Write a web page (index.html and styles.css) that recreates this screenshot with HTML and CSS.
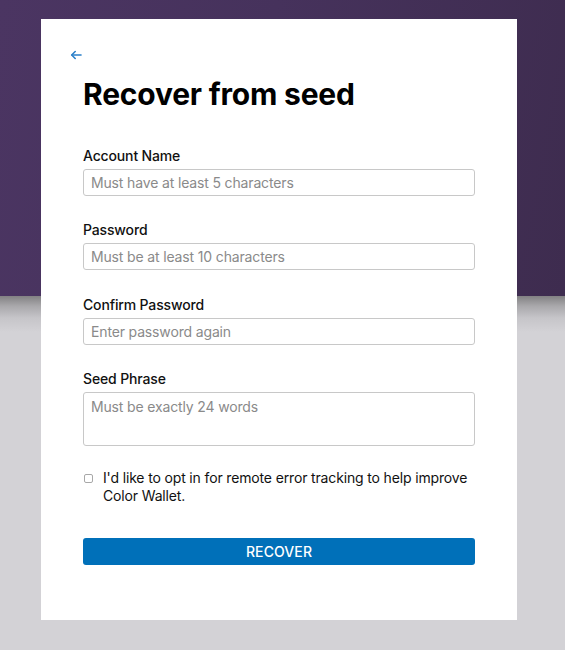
FILE: index.html
```html
<!DOCTYPE html>
<html lang="en">
<head>
<meta charset="utf-8">
<title>Recover from seed</title>
<link rel="stylesheet" href="styles.css">
</head>
<body>
<div class="backdrop">
  <div class="banner"></div>
  <div class="floor"></div>
</div>
<main class="card">
  <a class="back" href="#" aria-label="Back">
    <svg width="12" height="10" viewBox="0 0 12 10" fill="none" stroke="#2b80c9" stroke-width="1.6" stroke-linecap="round" stroke-linejoin="round"><path d="M11 5H2"/><path d="M5.2 1.5L1.7 5l3.5 3.5"/></svg>
  </a>
  <h1 class="title">Recover from seed</h1>
  <form class="form">
    <div class="field">
      <label class="label">Account Name</label>
      <input class="input" type="text" placeholder="Must have at least 5 characters">
    </div>
    <div class="field">
      <label class="label">Password</label>
      <input class="input" type="password" placeholder="Must be at least 10 characters">
    </div>
    <div class="field">
      <label class="label">Confirm Password</label>
      <input class="input" type="password" placeholder="Enter password again">
    </div>
    <div class="field">
      <label class="label">Seed Phrase</label>
      <textarea class="input textarea" placeholder="Must be exactly 24 words"></textarea>
    </div>
    <label class="optin">
      <input class="check" type="checkbox">
      <span>I'd like to opt in for remote error tracking to help improve Color Wallet.</span>
    </label>
    <button class="button" type="button">RECOVER</button>
  </form>
</main>
</body>
</html>
```

FILE: styles.css
```css
* { box-sizing: border-box; }
html, body { margin: 0; padding: 0; }
body {
  width: 565px;
  height: 650px;
  overflow: hidden;
  font-family: Inter, "Noto Sans", "Liberation Sans", sans-serif;
  letter-spacing: -0.15px;
  background: #d3d2d6;
  position: relative;
}
.backdrop {
  position: absolute;
  inset: 0;
  display: flex;
  flex-direction: column;
}
.banner {
  height: 296px;
  background: linear-gradient(100deg, #4b3562 0%, #46325c 45%, #3e2c4f 100%);
}
.floor {
  flex: 1;
  background: linear-gradient(180deg, #828183 0px, #a9a8ab 10px, #c6c5c9 22px, #d3d2d6 36px, #d3d2d6 100%);
}
.card {
  position: relative;
  margin: 19px 0 0 41px;
  width: 476px;
  height: 601px;
  background: #fff;
  padding: 31px 42px 0 42px;
}
.back {
  display: block;
  width: 12px;
  height: 10px;
  margin-left: -13px;
  line-height: 0;
}
.title {
  margin: 16px 0 0 0;
  font-size: 30px;
  line-height: 36px;
  font-weight: 700;
  color: #000;
  letter-spacing: -0.2px;
}
.form {
  margin-top: 35px;
  display: flex;
  flex-direction: column;
}
.field {
  display: flex;
  flex-direction: column;
  gap: 5px;
  margin-bottom: 25.33px;
}
.label {
  font-size: 14px;
  line-height: 17px;
  font-weight: 500;
  color: #111;
}
.input {
  width: 392px;
  height: 27px;
  border: 1px solid #c8c8c8;
  border-radius: 3px;
  padding: 0 7px;
  font-family: inherit;
  font-size: 14px;
  letter-spacing: -0.15px;
  color: #222;
  background: #fff;
  outline: none;
}
.input::placeholder { color: #8a8a8a; }
.textarea {
  height: 54px;
  padding: 5px 7px;
  resize: none;
  line-height: 17px;
}
.optin {
  display: flex;
  align-items: flex-start;
  gap: 10px;
  margin-top: -2px;
  font-size: 14px;
  line-height: 18px;
  color: #111;
}
.check {
  appearance: none;
  -webkit-appearance: none;
  margin: 5px 0 0 1px;
  flex: none;
  width: 9px;
  height: 9px;
  border: 1px solid #a8a8a8;
  border-radius: 2px;
  background: #fff;
}
.button {
  margin-top: 33px;
  width: 392px;
  height: 27px;
  border: none;
  border-radius: 3px;
  background: #0070b9;
  color: #fff;
  font-family: inherit;
  font-size: 14px;
  font-weight: 500;
  letter-spacing: 0.1px;
}
```
